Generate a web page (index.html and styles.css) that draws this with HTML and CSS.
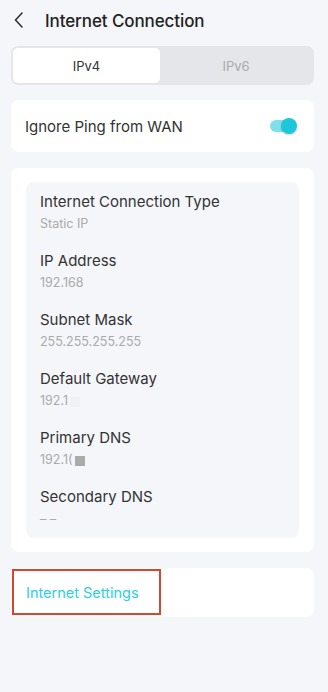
FILE: index.html
```html
<!DOCTYPE html>
<html>
<head>
<meta charset="utf-8">
<link rel="stylesheet" href="styles.css">
</head>
<body>
<div class="page">
  <header class="header">
    <svg class="back" width="12" height="18" viewBox="0 0 12 18"><path d="M9 2 L2.5 9 L9 16" fill="none" stroke="#333" stroke-width="1.6" stroke-linecap="round" stroke-linejoin="round"/></svg>
    <h1 class="title">Internet Connection</h1>
  </header>
  <div class="seg">
    <div class="seg-item active">IPv4</div>
    <div class="seg-item">IPv6</div>
  </div>
  <div class="card row-card">
    <span class="row-label">Ignore Ping from WAN</span>
    <span class="toggle"><span class="track"></span><span class="knob"></span></span>
  </div>
  <div class="card info-card">
    <div class="panel">
      <div class="item"><div class="label">Internet Connection Type</div><div class="value">Static IP</div></div>
      <div class="item"><div class="label">IP Address</div><div class="value">192.168</div></div>
      <div class="item"><div class="label">Subnet Mask</div><div class="value">255.255.255.255</div></div>
      <div class="item"><div class="label">Default Gateway</div><div class="value">192.1 <span class="mask faint"></span></div></div>
      <div class="item"><div class="label">Primary DNS</div><div class="value">192.1( <span class="mask"></span></div></div>
      <div class="item"><div class="label">Secondary DNS</div><div class="value">– –</div></div>
    </div>
  </div>
  <div class="card link-card">
    <a class="link">Internet Settings</a>
  </div>
</div>
</body>
</html>
```
FILE: styles.css
```css
* { box-sizing: border-box; }
html, body { margin: 0; padding: 0; background: #f5f6fa; }
body { font-family: Inter, "Noto Sans", sans-serif; color: #333; }
.page { padding: 0 14px 0 11px; }
.header { height: 46px; display: flex; align-items: center; }
.back { margin-left: 2px; margin-top: -6px; }
.title { margin: -5px 0 0 20px; font-size: 17px; font-weight: 500; color: #222; letter-spacing: -0.1px; }
.seg { display: flex; background: #e4e6ea; border-radius: 7px; padding: 2px; height: 39px; }
.seg-item { flex: 1; display: flex; align-items: center; justify-content: center; font-size: 13px; color: #aaa; border-radius: 5px; }
.seg-item.active { flex: 0 0 147px; background: #fff; color: #333; }
.card { background: #fff; border-radius: 8px; }
.row-card { margin-top: 15px; height: 52px; display: flex; align-items: center; justify-content: space-between; padding: 0 17px 0 14px; }
.row-label { font-size: 15px; color: #333; }
.toggle { position: relative; width: 27px; height: 16px; display: inline-block; }
.track { position: absolute; left: 0; top: 2px; width: 23px; height: 12px; border-radius: 6px; background: #7fe0ec; }
.knob { position: absolute; right: 0; top: 0; width: 16px; height: 16px; border-radius: 50%; background: #1dc7db; box-shadow: 0 1px 2px rgba(0,0,0,0.2); }
.info-card { margin-top: 16px; padding: 14px 15px; }
.panel { background: #f5f6fa; border-radius: 8px; padding: 10px 14px 9px; display: flex; flex-direction: column; gap: 17px; }
.label { font-size: 15px; line-height: 20px; color: #333; }
.value { font-size: 12.5px; line-height: 20px; margin-top: 2px; color: #aaa; display: flex; align-items: center; gap: 2px; }
.mask { display: inline-block; width: 10px; height: 10px; background: #aaa; margin-top: 2px; }
.mask.faint { background: #f0f1f4; }
.link-card { margin-top: 16px; height: 49px; padding: 1px; }
.link { display: inline-flex; align-items: center; width: 149px; height: 46px; border: 2px solid #d8462c; padding-left: 12px; font-size: 14.5px; color: #2dcfe0; }
```
